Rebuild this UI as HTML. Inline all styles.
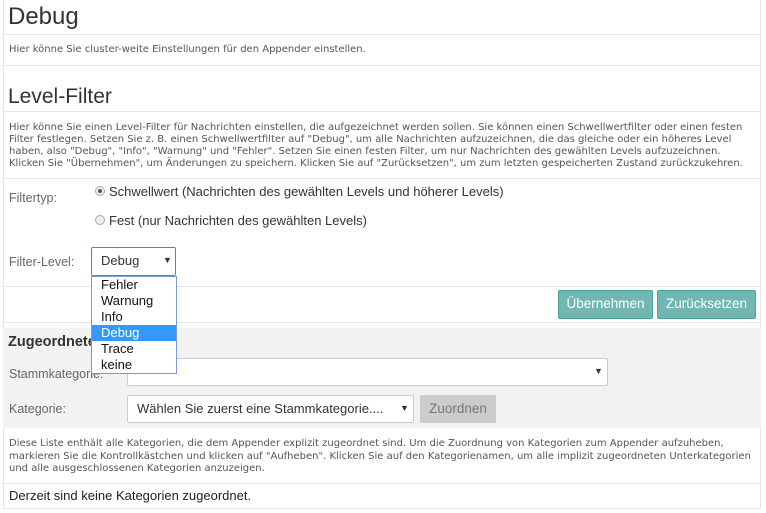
<!DOCTYPE html>
<html><head><meta charset="utf-8"><style>
*{margin:0;padding:0;box-sizing:border-box}
body{width:766px;height:513px;background:#fff;font-family:"Liberation Sans",Verdana,sans-serif;color:#333;position:relative;overflow:hidden}
.a{position:absolute;white-space:nowrap}
.hl{position:absolute;left:3px;width:758px;height:1px;background:#e6e6e6}
.vl{position:absolute;width:1px;background:#e6e6e6}
.sm{font-family:"DejaVu Sans",Verdana,sans-serif;font-size:10px;color:#555;line-height:12px}
.lbl{font-size:12.5px;color:#666}
.t{font-size:13px;color:#333}
.btn{position:absolute;background:#6fb7b0;border:1px solid #4aa39a;color:#fff;font-size:13.5px;text-align:center;line-height:26px;border-radius:2px}
.sel{position:absolute;background:#fff;border:1px solid #ccc;border-radius:2px;font-size:13px;color:#333;line-height:26px;padding-left:9px}
.arr{position:absolute;font-size:9px;color:#333}
.radio{position:absolute;width:10px;height:10px;border:1px solid #aaa;border-radius:50%;background:#eee}
</style></head><body>
<div class="vl" style="left:3px;top:0;height:509px"></div>
<div class="vl" style="left:760px;top:0;height:509px"></div>
<div class="a" style="left:8px;top:3px;font-size:24px;color:#333">Debug</div>
<div class="hl" style="top:34px"></div>
<div class="a sm" style="left:9px;top:44px">Hier könne Sie cluster-weite Einstellungen für den Appender einstellen.</div>
<div class="hl" style="top:65px"></div>
<div class="a" style="left:8px;top:85px;font-size:21px;color:#333">Level-Filter</div>
<div class="hl" style="top:111px"></div>
<div class="a sm" style="left:9px;top:122px">Hier könne Sie einen Level-Filter für Nachrichten einstellen, die aufgezeichnet werden sollen. Sie können einen Schwellwertfilter oder einen festen<br>Filter festlegen. Setzen Sie z. B. einen Schwellwertfilter auf "Debug", um alle Nachrichten aufzuzeichnen, die das gleiche oder ein höheres Level<br>haben, also "Debug", "Info", "Warnung" und "Fehler". Setzen Sie einen festen Filter, um nur Nachrichten des gewählten Levels aufzuzeichnen.<br>Klicken Sie "Übernehmen", um Änderungen zu speichern. Klicken Sie auf "Zurücksetzen", um zum letzten gespeicherten Zustand zurückzukehren.</div>
<div class="hl" style="top:178px"></div>
<div class="a lbl" style="left:9px;top:191px">Filtertyp:</div>
<div class="radio" style="left:95px;top:186px"><div style="position:absolute;left:2px;top:2px;width:4px;height:4px;border-radius:50%;background:#555"></div></div>
<div class="a t" style="left:109px;top:184px">Schwellwert (Nachrichten des gewählten Levels und höherer Levels)</div>
<div class="radio" style="left:95px;top:215px"></div>
<div class="a t" style="left:109px;top:213px">Fest (nur Nachrichten des gewählten Levels)</div>
<div class="a lbl" style="left:9px;top:255px">Filter-Level:</div>
<div class="sel" style="left:91px;top:247px;width:85px;height:29px;border-color:#3a9a92">Debug</div>
<div class="arr" style="left:163px;top:255px">▼</div>
<div class="hl" style="top:286px"></div>
<div class="btn" style="left:558px;top:290px;width:95px;height:29px">Übernehmen</div>
<div class="btn" style="left:657px;top:290px;width:99px;height:29px">Zurücksetzen</div>
<div class="hl" style="top:322px"></div>
<div class="a" style="left:3px;top:328px;width:758px;height:100px;background:#f2f2f2"></div>
<div class="a" style="left:8px;top:334px;font-size:14.5px;font-weight:bold;color:#333">Zugeordnete Kategorien</div>
<div class="a lbl" style="left:9px;top:367px">Stammkategorie:</div>
<div class="sel" style="left:127px;top:358px;width:481px;height:28px"></div>
<div class="arr" style="left:594px;top:366px">▼</div>
<div class="a lbl" style="left:9px;top:402px">Kategorie:</div>
<div class="sel" style="left:127px;top:395px;width:287px;height:28px">Wählen Sie zuerst eine Stammkategorie....</div>
<div class="arr" style="left:400px;top:403px">▼</div>
<div class="a" style="left:420px;top:395px;width:76px;height:28px;background:#ccc;border-radius:2px;color:#777;font-size:13.5px;line-height:28px;text-align:center">Zuordnen</div>
<div class="a sm" style="left:9px;top:438px;line-height:12.5px">Diese Liste enthält alle Kategorien, die dem Appender explizit zugeordnet sind. Um die Zuordnung von Kategorien zum Appender aufzuheben,<br>markieren Sie die Kontrollkästchen und klicken auf "Aufheben". Klicken Sie auf den Kategorienamen, um alle implizit zugeordneten Unterkategorien<br>und alle ausgeschlossenen Kategorien anzuzeigen.</div>
<div class="hl" style="top:483px"></div>
<div class="a" style="left:9px;top:488px;font-size:13px;color:#222">Derzeit sind keine Kategorien zugeordnet.</div>
<div class="hl" style="top:508px"></div>
<div class="a" style="left:91px;top:276px;width:86px;height:98px;background:#fff;border:1px solid #7a9cd3;font-size:13px;line-height:16px;color:#111">
<div style="padding-left:9px">Fehler</div>
<div style="padding-left:9px">Warnung</div>
<div style="padding-left:9px">Info</div>
<div style="padding-left:9px;background:#3399ff;color:#fff">Debug</div>
<div style="padding-left:9px">Trace</div>
<div style="padding-left:9px">keine</div>
</div>
</body></html>
